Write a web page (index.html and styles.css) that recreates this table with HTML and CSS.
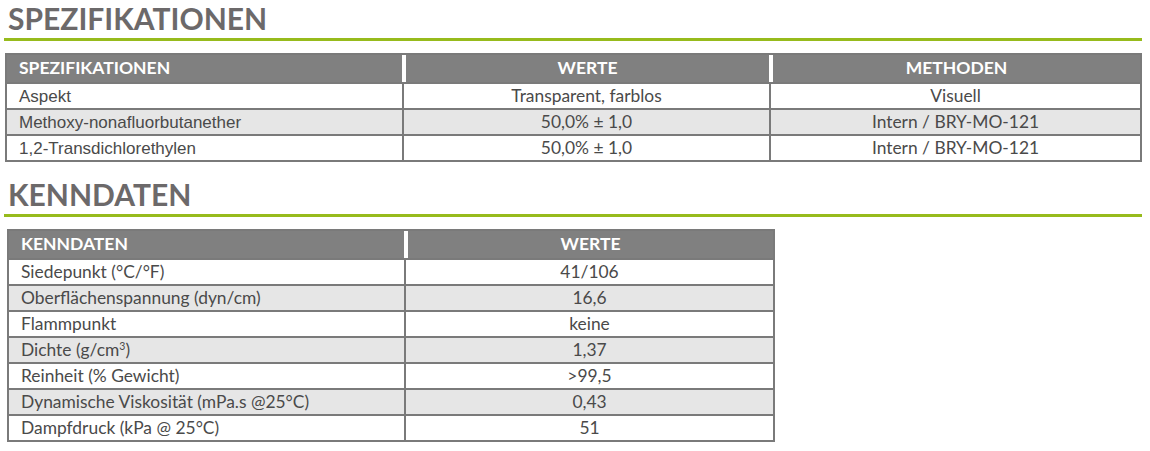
FILE: index.html
```html
<!DOCTYPE html>
<html lang="de">
<head>
<meta charset="utf-8">
<title>Spezifikationen</title>
<link rel="stylesheet" href="styles.css">
</head>
<body>
<main class="page">
  <section class="block">
    <h2 class="section-title">SPEZIFIKATIONEN</h2>
    <table class="data-table spec-table">
      <colgroup>
        <col class="c1"><col class="c2"><col class="c3">
      </colgroup>
      <thead>
        <tr><th class="left">SPEZIFIKATIONEN</th><th>WERTE</th><th>METHODEN</th></tr>
      </thead>
      <tbody>
        <tr><td class="left arial">Aspekt</td><td>Transparent, farblos</td><td>Visuell</td></tr>
        <tr class="alt"><td class="left arial">Methoxy-nonafluorbutanether</td><td>50,0% ± 1,0</td><td>Intern / BRY-MO-121</td></tr>
        <tr><td class="left arial">1,2-Transdichlorethylen</td><td>50,0% ± 1,0</td><td>Intern / BRY-MO-121</td></tr>
      </tbody>
    </table>
  </section>
  <section class="block second">
    <h2 class="section-title">KENNDATEN</h2>
    <table class="data-table kenn-table">
      <colgroup>
        <col class="k1"><col class="k2">
      </colgroup>
      <thead>
        <tr><th class="left">KENNDATEN</th><th>WERTE</th></tr>
      </thead>
      <tbody>
        <tr><td class="left">Siedepunkt (°C/°F)</td><td>41/106</td></tr>
        <tr class="alt"><td class="left">Oberflächenspannung (dyn/cm)</td><td>16,6</td></tr>
        <tr><td class="left">Flammpunkt</td><td>keine</td></tr>
        <tr class="alt"><td class="left">Dichte (g/cm<sup>3</sup>)</td><td>1,37</td></tr>
        <tr><td class="left">Reinheit (% Gewicht)</td><td>&gt;99,5</td></tr>
        <tr class="alt"><td class="left">Dynamische Viskosität (mPa.s @25°C)</td><td>0,43</td></tr>
        <tr><td class="left">Dampfdruck (kPa @ 25°C)</td><td>51</td></tr>
      </tbody>
    </table>
  </section>
</main>
</body>
</html>
```

FILE: styles.css
```css
html, body {
  margin: 0;
  padding: 0;
  background: #ffffff;
}

.page {
  width: 1138px;
  margin-left: 4px;
  font-family: Lato, "Liberation Sans", sans-serif;
}

.block.second {
  margin-top: 14px;
}

.section-title {
  margin: 0;
  padding: 0 0 2px 4px;
  font-family: Lato, sans-serif;
  font-weight: 700;
  font-size: 30px;
  line-height: 36px;
  color: #6c696a;
  border-bottom: 3px solid #97bb1c;
}

.data-table {
  margin-top: 12px;
  border-collapse: separate;
  border-spacing: 0;
  border: 2px solid #7a7a7a;
  table-layout: fixed;
  color: #4a4a4a;
}

.spec-table {
  margin-left: 1px;
  width: 1137px;
}

.kenn-table {
  margin-left: 3px;
  width: 768px;
}

.c1 { width: 395px; }
.c2 { width: 367px; }
.c3 { width: auto; }

.k1 { width: 395px; }
.k2 { width: auto; }

.data-table th {
  background: #808080;
  color: #ffffff;
  font-family: Lato, sans-serif;
  font-weight: 700;
  font-size: 17.5px;
  height: 27px;
  padding: 0 0 2px 0;
  text-align: center;
  border-left: 4px solid #ffffff;
  box-sizing: border-box;
}

.data-table th:first-child {
  border-left: 0;
}

.data-table td {
  height: 26px;
  padding: 0 0 2px 0;
  font-size: 17.4px;
  text-align: center;
  background: #ffffff;
  border-top: 2px solid #7a7a7a;
  border-left: 2px solid #7a7a7a;
  box-sizing: border-box;
}

.data-table td:first-child {
  border-left: 0;
}

.data-table th.left,
.data-table td.left {
  text-align: left;
  padding-left: 12px;
}

.data-table td.arial {
  font-family: "Liberation Sans", Arial, sans-serif;
  font-size: 17px;
  padding-top: 2px;
  padding-bottom: 0;
}

.data-table tr.alt td {
  background: #e6e6e6;
}

sup {
  font-size: 10.5px;
  line-height: 0;
  vertical-align: 6px;
}
```
